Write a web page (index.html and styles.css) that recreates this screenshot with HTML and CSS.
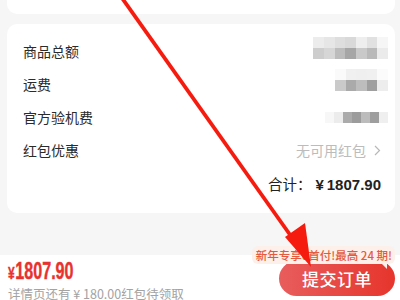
FILE: index.html
```html
<!DOCTYPE html>
<html lang="zh">
<head>
<meta charset="utf-8">
<link rel="stylesheet" href="styles.css">
</head>
<body>
<div class="page">
  <div class="card-top"></div>
  <div class="card">
    <div class="row">
      <span class="label">商品总额</span>
      <div class="mosaic m1">
        <i style="background:#ececec"></i><i style="background:#e6e6e6"></i><i style="background:#dedede"></i><i style="background:#d9d9d9"></i><i style="background:#eeeeee"></i><i style="background:#e1e1e1"></i><i style="background:#f6f6f6"></i>
        <i style="background:#cdcdcd"></i><i style="background:#d6d6d6"></i><i style="background:#bcbcbc"></i><i style="background:#a6a6a6"></i><i style="background:#c9c9c9"></i><i style="background:#b9b9b9"></i><i style="background:#ebebeb"></i>
      </div>
    </div>
    <div class="row">
      <span class="label">运费</span>
      <div class="mosaic m2">
        <i style="background:#fafafa"></i><i style="background:#f0f0f0"></i><i style="background:#efefef"></i><i style="background:#f0f0f0"></i><i style="background:#fbfbfb"></i>
        <i style="background:#cacaca"></i><i style="background:#aaaaaa"></i><i style="background:#bdbdbd"></i><i style="background:#9f9f9f"></i><i style="background:#ededed"></i>
      </div>
    </div>
    <div class="row">
      <span class="label">官方验机费</span>
      <div class="mosaic m3">
        <i style="background:#f7f7f7"></i><i style="background:#ececec"></i><i style="background:#ababab"></i><i style="background:#9c9c9c"></i><i style="background:#bcbcbc"></i><i style="background:#9e9e9e"></i><i style="background:#efefef"></i>
      </div>
    </div>
    <div class="row">
      <span class="label">红包优惠</span>
      <span class="muted">无可用红包<svg class="chev" width="7" height="11" viewBox="0 0 7 11"><path d="M1 1l4.5 4.5L1 10" fill="none" stroke="#b8b8b8" stroke-width="1.2"/></svg></span>
    </div>
    <div class="row total-row">
      <span class="total">合计：<b><span class="ty">¥</span>1807.90</b></span>
    </div>
  </div>
  <div class="gap"></div>
  <div class="footer">
    <div class="left">
      <div class="price"><span class="yen">¥</span>1807.90</div>
      <div class="hint">详情页还有 ¥ 180.00红包待领取</div>
    </div>
    <div class="right">
      <div class="badge">新年专享0首付!最高 24 期!</div>
      <button class="submit">提交订单</button>
    </div>
  </div>
  <svg class="arrow" width="400" height="300" viewBox="0 0 400 300">
    <line x1="122" y1="-2" x2="298" y2="246" stroke="#f61b0f" stroke-width="3.8"/>
    <polygon points="311,267 285,237 305,223" fill="#f61b0f"/>
  </svg>
</div>
</body>
</html>
```
FILE: styles.css
```css
* { box-sizing: border-box; }
html, body { margin: 0; padding: 0; }
body {
  width: 400px;
  height: 300px;
  overflow: hidden;
  background: #f6f6f6;
  font-family: "Liberation Sans", "Noto Sans CJK SC", sans-serif;
  color: #333;
}
.page { position: relative; width: 400px; height: 300px; display: flex; flex-direction: column; }
.card-top {
  height: 14px;
  margin: 0 5px 0 7px;
  background: #fff;
  border-radius: 0 0 10px 10px;
}
.card {
  margin: 10px 5px 0 7px;
  background: #fff;
  border-radius: 10px;
  padding: 11px 14px 13px 16px;
  display: flex;
  flex-direction: column;
}
.row {
  height: 33px;
  display: flex;
  align-items: center;
  justify-content: space-between;
  font-size: 14px;
}
.label { color: #2b2b2b; font-family: "Noto Sans CJK SC", sans-serif; }
.mosaic { display: grid; grid-auto-rows: 11px; margin-right: -7px; }
.mosaic i { display: block; }
.m1 { grid-template-columns: repeat(7, 10.7px); margin-bottom: 7px; }
.m2 { grid-template-columns: repeat(5, 10.6px); margin-bottom: 8px; }
.m3 { grid-template-columns: repeat(7, 9px); }
.muted {
  color: #bcbcbc;
  font-family: "Noto Sans CJK SC", sans-serif;
  display: flex;
  align-items: center;
}
.chev { margin-left: 8px; }
.total-row { justify-content: flex-end; }
.total { font-family: "Noto Sans CJK SC", sans-serif; color: #222; font-size: 14.5px; }
.total b { font-family: "Liberation Sans", sans-serif; font-weight: bold; font-size: 15px; }
.ty { margin: 0 3px 0 4px; }
.gap { height: 43px; }
.footer {
  flex: 1;
  background: #fff;
  display: flex;
  justify-content: space-between;
  padding: 0 5px 0 8px;
}
.left { display: flex; flex-direction: column; padding-top: 5px; }
.price {
  color: #e8322f;
  font-family: "Liberation Sans", sans-serif;
  font-weight: bold;
  font-size: 23px;
  line-height: 23px;
  transform: scaleX(0.7);
  transform-origin: left center;
  white-space: nowrap;
  -webkit-text-stroke: 0.4px #e8322f;
}
.yen { font-size: 17px; margin-right: 1px; }
.hint {
  color: #a3a3a3;
  font-size: 12.5px;
  line-height: 13px;
  margin-top: 2px;
  font-family: "Noto Sans CJK SC", sans-serif;
  white-space: nowrap;
}
.right { position: relative; padding-top: 6px; }
.badge {
  position: absolute;
  right: 0;
  bottom: 36px;
  white-space: nowrap;
  background: #fdf0eb;
  color: #e45a3e;
  font-size: 11.5px;
  font-weight: 500;
  line-height: 18px;
  padding: 0 3px 0 4px;
  border-radius: 6px;
  font-family: "Noto Sans CJK SC", sans-serif;
}
.badge::after {
  content: "";
  position: absolute;
  right: 8px;
  bottom: -5px;
  border-left: 6px solid transparent;
  border-top: 6px solid #fdf0eb;
}
.submit {
  width: 116px;
  height: 35px;
  border: 0;
  border-radius: 18px;
  background: linear-gradient(90deg, #e85d5d, #e6352c);
  color: #fff;
  font-size: 17px;
  font-family: "Noto Sans CJK SC", sans-serif;
  font-weight: 500;
  letter-spacing: 0.5px;
  padding: 0;
}
.arrow { position: absolute; left: 0; top: 0; pointer-events: none; }
```
